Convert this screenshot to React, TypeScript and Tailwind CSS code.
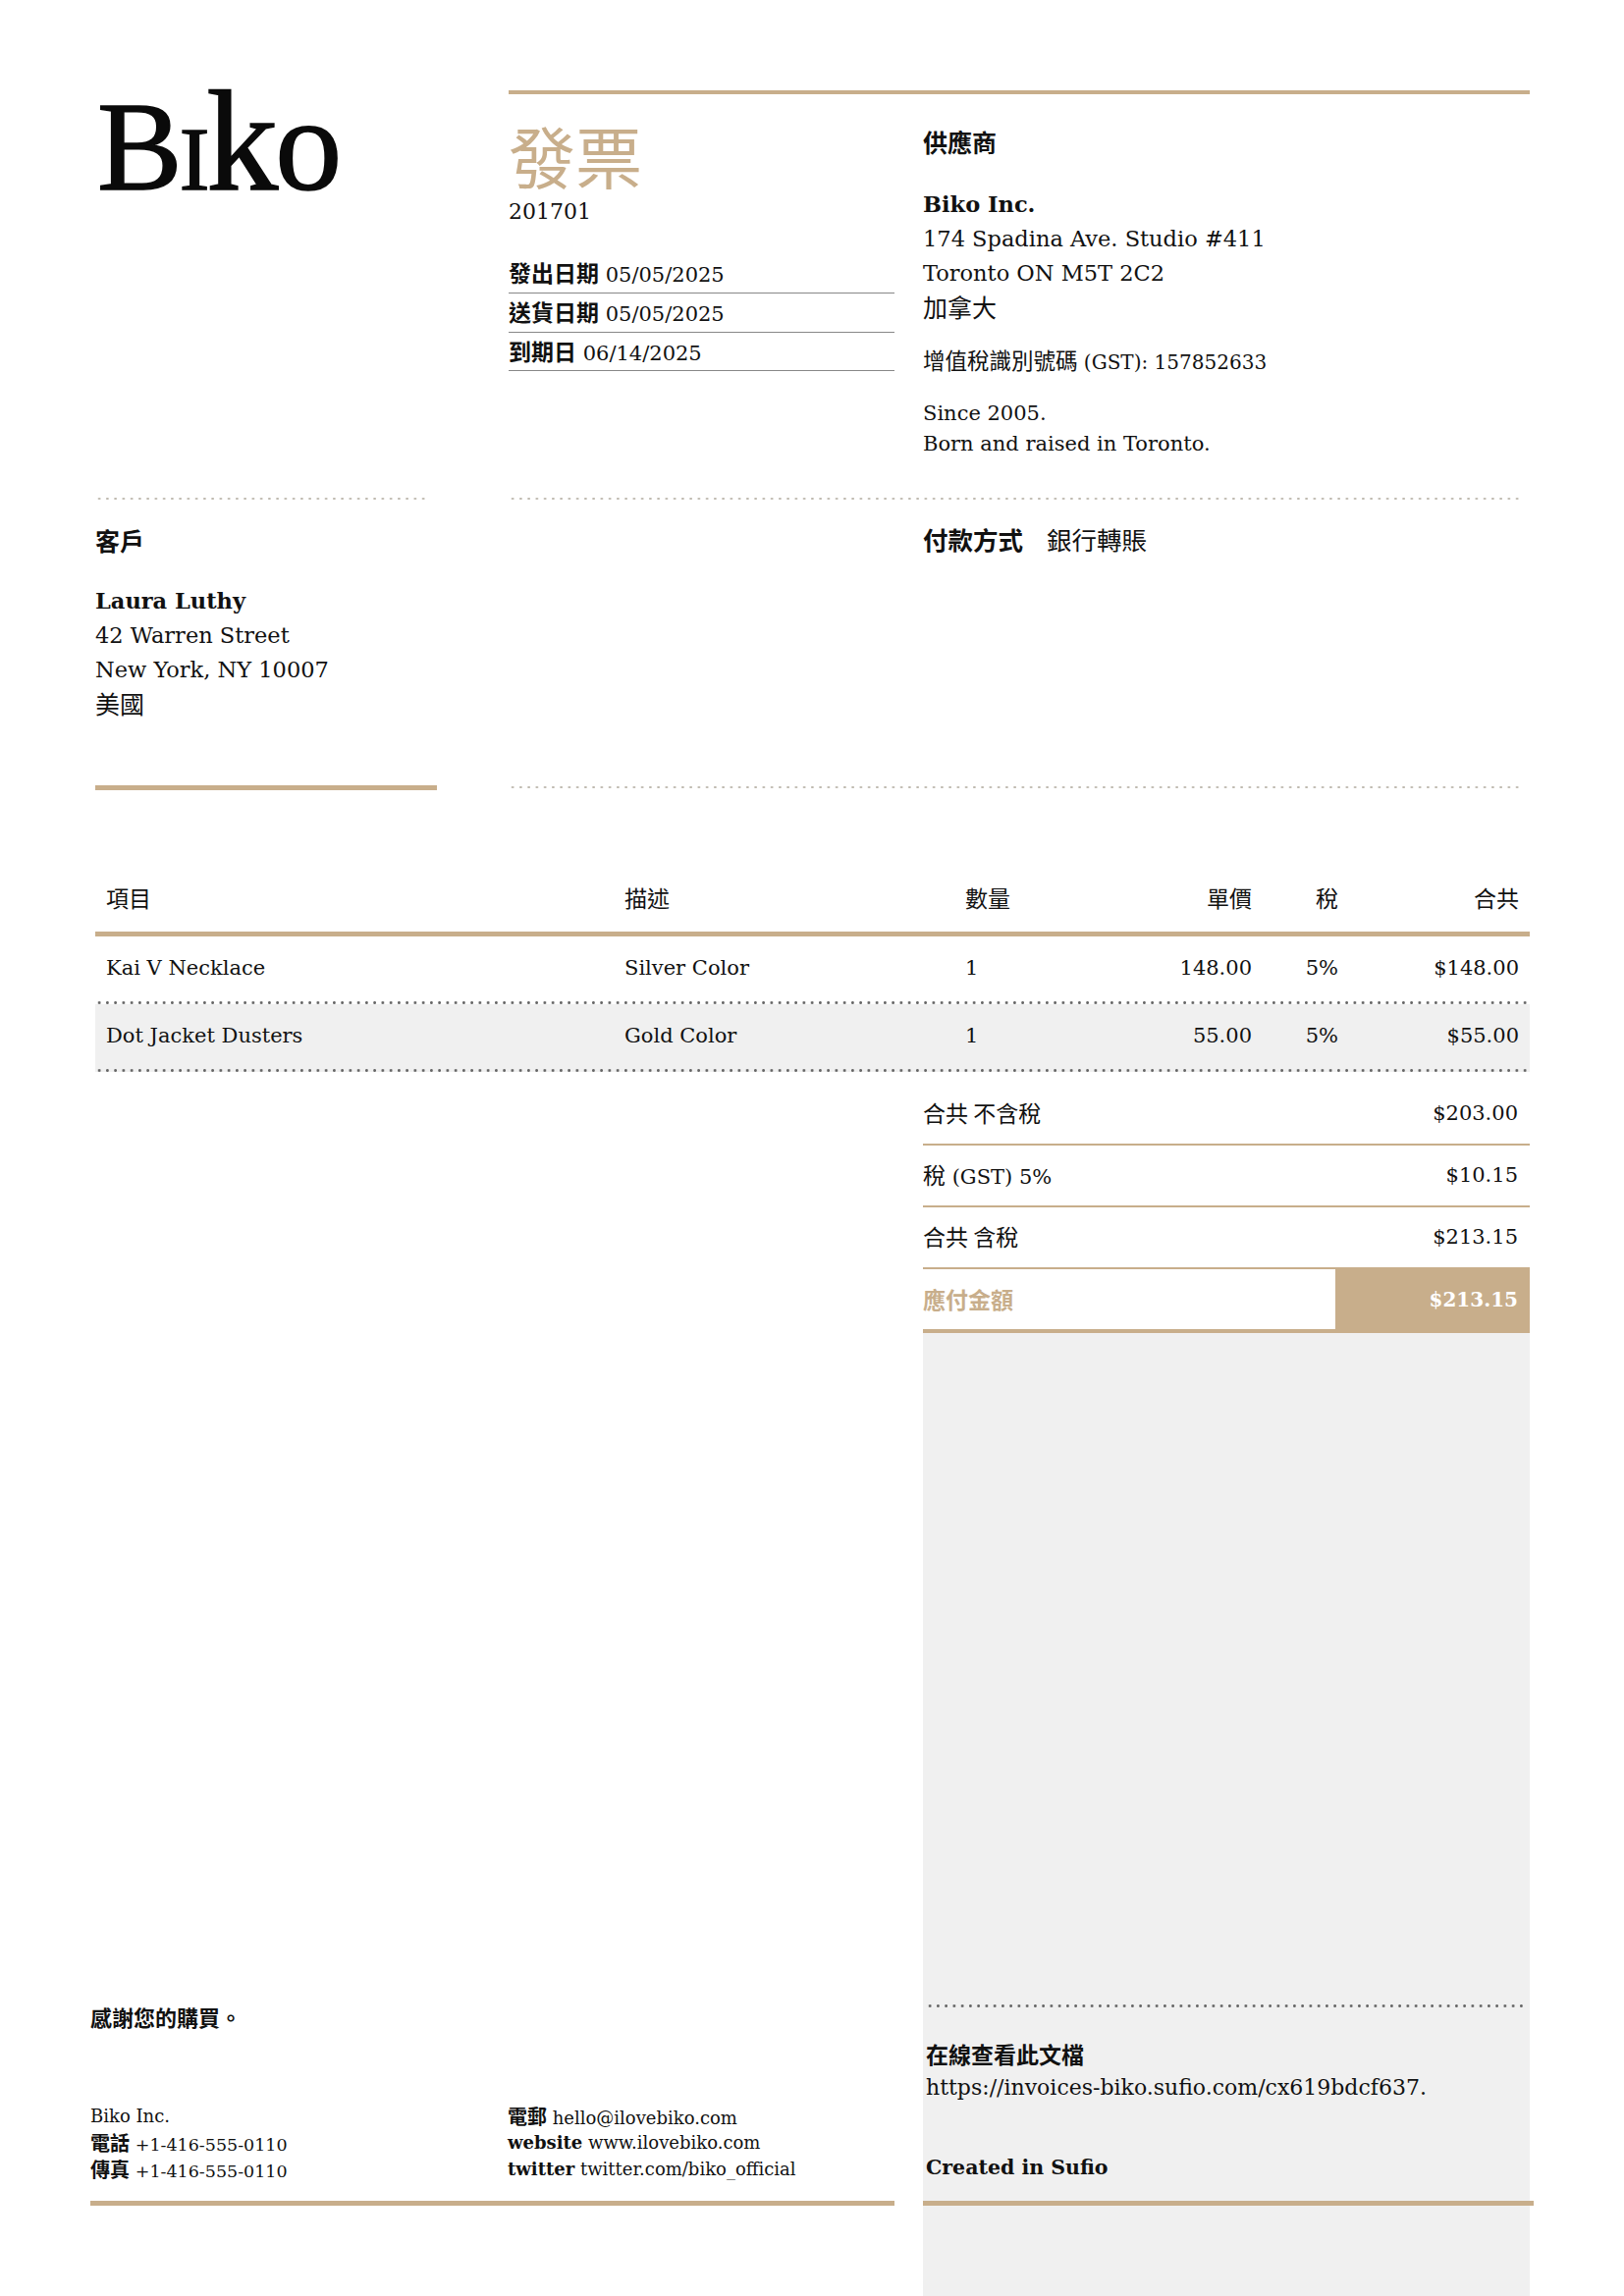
const rows = [
  { item: "Kai V Necklace", desc: "Silver Color", qty: "1", price: "148.00", tax: "5%", total: "$148.00" },
  { item: "Dot Jacket Dusters", desc: "Gold Color", qty: "1", price: "55.00", tax: "5%", total: "$55.00" },
];

const totals = [
  { cjk: "合共 不含稅", latin: "", value: "$203.00" },
  { cjk: "稅", latin: " (GST) 5%", value: "$10.15" },
  { cjk: "合共 含稅", latin: "", value: "$213.15" },
];

function Dots({ className = "" }: { className?: string }) {
  return (
    <div
      className={`h-[2px] bg-[radial-gradient(circle,#bdb8ae_1px,transparent_1.2px)] bg-[length:8.25px_2px] bg-repeat-x ${className}`}
    />
  );
}

function DarkDots({ className = "" }: { className?: string }) {
  return (
    <div
      className={`h-[3px] bg-[radial-gradient(circle,#666666_1.2px,transparent_1.6px)] bg-[length:8.25px_3px] bg-repeat-x ${className}`}
    />
  );
}

export default function App() {
  return (
    <div className="h-[2339px] w-[1654px] overflow-hidden bg-white pl-[97px] pr-[96px] pt-[92px] font-['DejaVu_Serif','Noto_Sans_CJK_TC',serif] text-[#111]">
      {/* Header */}
      <div className="flex">
        <div className="w-[421px] shrink-0">
          <div className="-mt-[8px] flex h-[120px] items-baseline pl-[2px] font-['Liberation_Serif',serif] text-[130px] font-normal leading-[120px] tracking-[-3px] text-[#0a0a0a] [-webkit-text-stroke:1.5px_#0a0a0a]">
            <span>B</span>
            <span className="text-[92px]">I</span>
            <span className="text-[146px]">k</span>
            <span className="text-[136px]">o</span>
          </div>
        </div>
        <div className="min-w-0 flex-1 border-t-4 border-[#c8ae8b]">
          <div className="flex">
            <div className="w-[393px] shrink-0">
              <div className="mt-[26px] font-['Noto_Sans_CJK_TC',sans-serif] text-[68px] font-normal leading-[72px] text-[#c8ae8b]">發票</div>
              <div className="mt-[6px] text-[22px] leading-[32px]">201701</div>
              <div className="mt-[27px] text-[21px]">
                <div className="h-[40px] border-b border-[#888] pt-[4px] leading-[28px]">
                  <b className="font-['Noto_Sans_CJK_TC',sans-serif] text-[23px]">發出日期</b> 05/05/2025
                </div>
                <div className="h-[40px] border-b border-[#888] pt-[4px] leading-[28px]">
                  <b className="font-['Noto_Sans_CJK_TC',sans-serif] text-[23px]">送貨日期</b> 05/05/2025
                </div>
                <div className="h-[39px] border-b border-[#888] pt-[4px] leading-[28px]">
                  <b className="font-['Noto_Sans_CJK_TC',sans-serif] text-[23px]">到期日</b> 06/14/2025
                </div>
              </div>
            </div>
            <div className="ml-[29px] flex-1 pt-[31px]">
              <div className="font-['Noto_Sans_CJK_TC',sans-serif] text-[25px] font-bold leading-[34px]">供應商</div>
              <div className="mt-[30px] text-[22.5px] leading-[35px]">
                <div className="font-bold">Biko Inc.</div>
                <div>174 Spadina Ave. Studio #411</div>
                <div>Toronto ON M5T 2C2</div>
                <div className="h-[35px] font-['Noto_Sans_CJK_TC',sans-serif] text-[25px] leading-[32px]">加拿大</div>
              </div>
              <div className="mt-[19px] h-[32px] text-[20px] leading-[32px]">
                <span className="font-['Noto_Sans_CJK_TC',sans-serif] text-[22.5px]">增值稅識別號碼</span> (GST): 157852633
              </div>
              <div className="mt-[24px] text-[21px] leading-[31px]">
                <div>Since 2005.</div>
                <div>Born and raised in Toronto.</div>
              </div>
            </div>
          </div>
        </div>
      </div>

      {/* Client and payment */}
      <div className="mt-[39px] flex">
        <div className="w-[421px] shrink-0">
          <Dots className="w-[339px]" />
          <div className="mt-[24px] font-['Noto_Sans_CJK_TC',sans-serif] text-[25px] font-bold leading-[34px]">客戶</div>
          <div className="mt-[28px] text-[22.5px] leading-[35px]">
            <div className="font-bold">Laura Luthy</div>
            <div>42 Warren Street</div>
            <div>New York, NY 10007</div>
            <div className="h-[35px] font-['Noto_Sans_CJK_TC',sans-serif] text-[25px] leading-[32px]">美國</div>
          </div>
          <div className="mt-[65px] h-[5px] w-[348px] bg-[#c8ae8b]" />
        </div>
        <div className="flex flex-1 flex-col">
          <Dots className="w-[1029px]" />
          <div className="mt-[23px] flex h-[272px] items-start pl-[422px] font-['Noto_Sans_CJK_TC',sans-serif] text-[25.5px] leading-[34px]">
            <b className="w-[126px]">付款方式</b>
            <span>銀行轉賬</span>
          </div>
          <Dots className="-mt-[3px] w-[1029px]" />
        </div>
      </div>

      {/* Items table */}
      <div className="mt-[97px]">
        <div className="flex h-[52px] items-center border-b-[5px] border-[#c8ae8b] pb-[23px] pl-[11px] pr-[11px] font-['Noto_Sans_CJK_TC',sans-serif] text-[23px]">
          <div className="w-[528px]">項目</div>
          <div className="w-[347px]">描述</div>
          <div className="w-[100px]">數量</div>
          <div className="w-[192px] text-right">單價</div>
          <div className="w-[88px] text-right">稅</div>
          <div className="flex-1 text-right">合共</div>
        </div>
        {rows.map((row, i) => (
          <div key={row.item} className={i === 1 ? "bg-[#f0f0f0]" : ""}>
            <div className="flex h-[66px] items-center pl-[11px] pr-[11px] text-[21px]">
              <div className="w-[528px]">{row.item}</div>
              <div className="w-[347px]">{row.desc}</div>
              <div className="w-[100px]">{row.qty}</div>
              <div className="w-[192px] text-right">{row.price}</div>
              <div className="w-[88px] text-right">{row.tax}</div>
              <div className="flex-1 text-right">{row.total}</div>
            </div>
            <DarkDots />
          </div>
        ))}
      </div>

      {/* Bottom part */}
      <div className="flex h-[1247px]">
        <div className="flex w-[843px] shrink-0 flex-col justify-end pb-[92px]">
          <div className="-ml-[5px] font-['Noto_Sans_CJK_TC',sans-serif] text-[22px] font-bold leading-[32px]">感謝您的購買。</div>
          <div className="-ml-[5px] mt-[72px] flex text-[18px]">
            <div className="w-[425px]">
              <div className="h-[27px] leading-[27px]">Biko Inc.</div>
              <div className="h-[27px] leading-[27px]"><b className="font-['Noto_Sans_CJK_TC',sans-serif] text-[20px]">電話</b> <span className="text-[17.5px]">+1-416-555-0110</span></div>
              <div className="h-[27px] leading-[27px]"><b className="font-['Noto_Sans_CJK_TC',sans-serif] text-[20px]">傳真</b> <span className="text-[17.5px]">+1-416-555-0110</span></div>
            </div>
            <div>
              <div className="h-[27px] leading-[27px]"><b className="font-['Noto_Sans_CJK_TC',sans-serif] text-[20px]">電郵</b> hello@ilovebiko.com</div>
              <div className="h-[27px] leading-[27px]"><b>website</b> www.ilovebiko.com</div>
              <div className="h-[27px] leading-[27px]"><b>twitter</b> twitter.com/biko_official</div>
            </div>
          </div>
          <div className="-ml-[5px] mt-[19px] h-[5px] w-[819px] bg-[#c8ae8b]" />
        </div>
        <div className="flex min-w-0 flex-1 flex-col pt-[12px]">
          {totals.map((t) => (
            <div key={t.cjk} className="flex h-[63px] items-center justify-between border-b-2 border-[#c8ae8b] pr-[12px] text-[21px]">
              <span>
                <span className="font-['Noto_Sans_CJK_TC',sans-serif] text-[23px]">{t.cjk}</span>
                {t.latin}
              </span>
              <span>{t.value}</span>
            </div>
          ))}
          <div className="flex h-[65px] items-stretch border-b-[4px] border-[#c8ae8b] font-bold">
            <div className="flex flex-1 items-center font-['Noto_Sans_CJK_TC',sans-serif] text-[23px] text-[#c8ae8b]">應付金額</div>
            <div className="flex w-[198px] items-center justify-end bg-[#c8ae8b] pr-[12px] text-[20px] text-white">$213.15</div>
          </div>
          <div className="flex flex-1 flex-col bg-[#f0f0f0] pl-[3px] pt-[684px]">
            <DarkDots className="w-[611px]" />
            <div className="mt-[31px] font-['Noto_Sans_CJK_TC',sans-serif] text-[23px] font-bold leading-[32px]">在線查看此文檔</div>
            <div className="mt-[2px] whitespace-nowrap text-[22px] leading-[34px]">https://invoices-biko.sufio.com/cx619bdcf637.</div>
            <div className="mt-[47px] text-[20.5px] font-bold leading-[34px]">Created in Sufio</div>
            <div className="-ml-[3px] mt-[17px] h-[5px] w-[622px] bg-[#c8ae8b]" />
          </div>
        </div>
      </div>
    </div>
  );
}
